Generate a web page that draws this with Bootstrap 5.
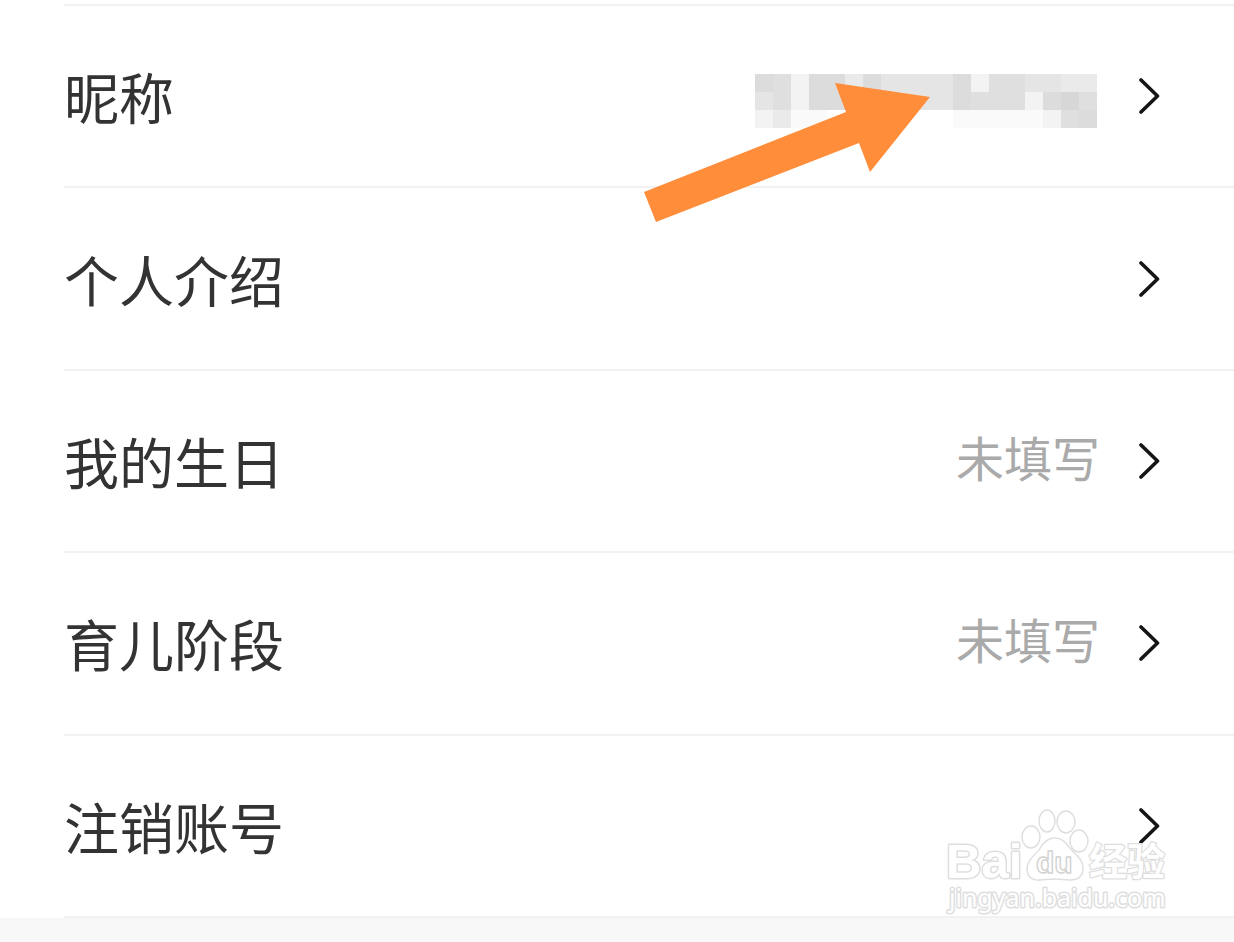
<!DOCTYPE html>
<html lang="zh-CN">
<head>
<meta charset="utf-8">
<meta name="viewport" content="width=device-width, initial-scale=1">
<title>个人资料</title>
<link href="https://cdn.jsdelivr.net/npm/bootstrap@5.3.0/dist/css/bootstrap.min.css" rel="stylesheet">
<style>
  body { background: #fff; font-family: "Noto Sans CJK SC", sans-serif; }
  .page-end { height: 24px; background: #f8f8f8; }
  .settings { margin-left: 64px; margin-top: 4px; border-top: 2px solid #f2f2f2; }
  .setting { flex: 1 1 0; border-bottom: 2px solid #f2f2f2; padding-right: 74px; color: #333; }
  .setting:hover { color: #333; }
  .setting-label { font-size: 55px; line-height: 80px; padding-bottom: 2px; }
  .setting-value { font-size: 48px; line-height: 72px; color: #aaa; margin-right: 38px; padding-bottom: 10px; }
  .masked { margin-right: 41px; padding-top: 10px; }
  .brand { right: 60px; bottom: 24px; pointer-events: none; }
  .pointer { pointer-events: none; }
</style>
</head>
<body>
<div class="min-vh-100 d-flex flex-column position-relative overflow-hidden">
  <main class="settings flex-grow-1 d-flex flex-column">
    <a href="#" class="setting d-flex align-items-center text-decoration-none">
      <span class="setting-label me-auto">昵称</span>
      <span class="masked d-flex">
        <svg width="342" height="54" viewBox="0 0 19 3" shape-rendering="crispEdges" aria-hidden="true">
          <path fill="#e5e5e5" d="M0 0h19v2H0z"/>
          <path fill="#dcdcdc" d="M0 0h1v1H0zM3 0h2v2H3zM6 0h1v1H6zM11 0h1v2h-1zM16 1h1v1h-1zM18 2h1v1h-1z"/>
          <path fill="#dfdfdf" d="M1 0h1v2H1zM12 1h3v1h-3zM13 0h2v1h-2zM18 1h1v1h-1zM17 2h1v1h-1z"/>
          <path fill="#d7d7d7" d="M17 1h1v1h-1z"/>
          <path fill="#eaeaea" d="M5 0h1v1H5zM17 0h2v1h-2zM1 2h1v1H1z"/>
          <path fill="#f3f3f3" d="M2 0h1v2H2zM12 0h1v1h-1zM15 1h1v1h-1zM0 2h1v1H0zM16 2h1v1h-1z"/>
          <path fill="#fafafa" d="M2 2h2v1H2zM11 2h5v1h-5z"/>
        </svg>
      </span>
      <svg width="22" height="38" viewBox="0 0 22 38" fill="none" stroke="#151515" stroke-width="3.6" stroke-linecap="round" stroke-linejoin="round" aria-hidden="true"><path d="M3 3 19.5 19 3 35"/></svg>
    </a>
    <a href="#" class="setting d-flex align-items-center text-decoration-none">
      <span class="setting-label me-auto">个人介绍</span>
      <svg width="22" height="38" viewBox="0 0 22 38" fill="none" stroke="#151515" stroke-width="3.6" stroke-linecap="round" stroke-linejoin="round" aria-hidden="true"><path d="M3 3 19.5 19 3 35"/></svg>
    </a>
    <a href="#" class="setting d-flex align-items-center text-decoration-none">
      <span class="setting-label me-auto">我的生日</span>
      <span class="setting-value">未填写</span>
      <svg width="22" height="38" viewBox="0 0 22 38" fill="none" stroke="#151515" stroke-width="3.6" stroke-linecap="round" stroke-linejoin="round" aria-hidden="true"><path d="M3 3 19.5 19 3 35"/></svg>
    </a>
    <a href="#" class="setting d-flex align-items-center text-decoration-none">
      <span class="setting-label me-auto">育儿阶段</span>
      <span class="setting-value">未填写</span>
      <svg width="22" height="38" viewBox="0 0 22 38" fill="none" stroke="#151515" stroke-width="3.6" stroke-linecap="round" stroke-linejoin="round" aria-hidden="true"><path d="M3 3 19.5 19 3 35"/></svg>
    </a>
    <a href="#" class="setting d-flex align-items-center text-decoration-none">
      <span class="setting-label me-auto">注销账号</span>
      <svg width="22" height="38" viewBox="0 0 22 38" fill="none" stroke="#151515" stroke-width="3.6" stroke-linecap="round" stroke-linejoin="round" aria-hidden="true"><path d="M3 3 19.5 19 3 35"/></svg>
    </a>
  </main>
  <div class="page-end"></div>

  <!-- arrow pointing at the nickname -->
  <svg class="pointer position-absolute end-0 top-0" width="594" height="230" viewBox="640 0 594 230" aria-hidden="true">
    <path fill="#ff8d3a" d="M644 192 846 112 835 83 930 97 870 172 859 143 656 222z"/>
  </svg>

  <!-- watermark -->
  <svg class="brand position-absolute" width="234" height="118" viewBox="940 800 234 118" fill="#fff" stroke="#dedede" stroke-width="1.4" stroke-linejoin="round">
    <text x="946" y="878" font-family="Liberation Sans, sans-serif" font-weight="700" font-size="49" stroke-width="3" paint-order="stroke">Bai</text>
    <ellipse cx="1031" cy="837" rx="9" ry="11"/>
    <ellipse cx="1047" cy="821" rx="8" ry="11"/>
    <ellipse cx="1066" cy="822" rx="9" ry="11"/>
    <ellipse cx="1079" cy="841" rx="9" ry="11"/>
    <path d="M1055 838c-7 0-11 4-14 9-4 7-14 12-14 22 0 8 6 12 13 11 5 0 9-1 15-1s10 1 15 1c8 0 13-4 13-12 0-10-9-14-14-21-4-5-7-9-14-9z"/>
    <text x="1036" y="873" font-family="Liberation Sans, sans-serif" font-weight="700" font-size="30" stroke="#d2d2d2">du</text>
    <text x="1089" y="875" font-family="Noto Sans CJK SC, sans-serif" font-weight="700" font-size="38" stroke-width="2.5" paint-order="stroke">经验</text>
    <text x="949" y="907" font-family="Noto Sans, sans-serif" font-size="25" stroke-width="3" paint-order="stroke">jingyan.baidu.com</text>
  </svg>
</div>
<script src="https://cdn.jsdelivr.net/npm/bootstrap@5.3.0/dist/js/bootstrap.bundle.min.js"></script>
</body>
</html>
